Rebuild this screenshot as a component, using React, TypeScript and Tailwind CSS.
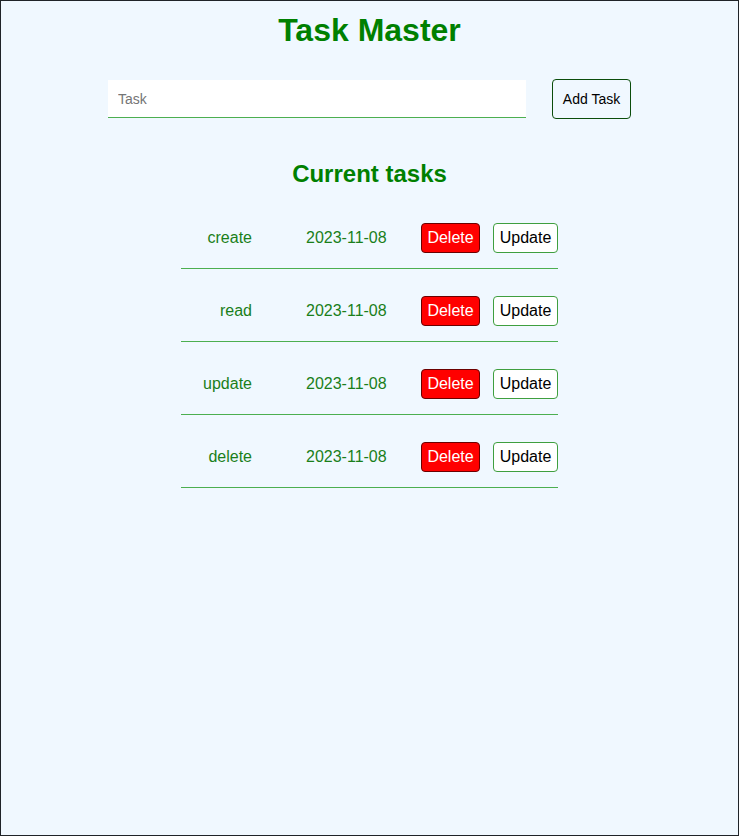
import React, { useState } from 'react';

type Task = {
  id: number;
  name: string;
  date: string;
};

const initialTasks: Task[] = [
  { id: 1, name: 'create', date: '2023-11-08' },
  { id: 2, name: 'read', date: '2023-11-08' },
  { id: 3, name: 'update', date: '2023-11-08' },
  { id: 4, name: 'delete', date: '2023-11-08' },
];

const App: React.FC = () => {
  const [tasks, setTasks] = useState<Task[]>(initialTasks);
  const [newTask, setNewTask] = useState('');

  const handleAdd = (e: React.FormEvent) => {
    e.preventDefault();
    if (!newTask.trim()) return;
    setTasks([...tasks, { id: Date.now(), name: newTask, date: '2023-11-08' }]);
    setNewTask('');
  };

  const handleDelete = (id: number) => {
    setTasks(tasks.filter((t) => t.id !== id));
  };

  return (
    <div className="h-[836px] border border-[#1f2328] bg-[#f0f8ff] font-['Liberation_Sans',Arial,sans-serif] flex flex-col items-center">
      <h1 className="mt-[11px] text-[32px] leading-[37px] font-bold text-[#008000]">Task Master</h1>

      <form onSubmit={handleAdd} className="mt-[30px] flex items-center">
        <input
          type="text"
          placeholder="Task"
          value={newTask}
          onChange={(e) => setNewTask(e.target.value)}
          className="w-[418px] h-[38px] px-[10px] bg-white text-[14px] text-black placeholder:text-[#757575] border-b border-b-[#4caf50] outline-none"
        />
        <button
          type="submit"
          className="ml-[26px] w-[79px] h-[40px] text-[14px] text-black bg-[#f0f8ff] border border-[#0b4d0b] rounded-[4px]"
        >
          Add Task
        </button>
      </form>

      <h2 className="mt-[41px] text-[24px] leading-[28px] font-bold text-[#008000]">Current tasks</h2>

      <ul className="mt-[8px] w-[377px]">
        {tasks.map((task) => (
          <li key={task.id} className="flex items-center pt-[27px] pb-[15px] border-b border-b-[#4caf50]">
            <span className="w-[71px] text-right text-[16px] text-[#1a7f1a]">{task.name}</span>
            <span className="ml-[54px] w-[82px] text-[16px] text-[#1a7f1a]">{task.date}</span>
            <button
              onClick={() => handleDelete(task.id)}
              className="ml-[33px] w-[59px] h-[30px] text-[16px] text-white bg-[#ff0000] border border-[#6b0000] rounded-[4px]"
            >
              Delete
            </button>
            <button className="ml-[13px] w-[65px] h-[30px] text-[16px] text-black bg-white border border-[#3f9f3f] rounded-[4px]">
              Update
            </button>
          </li>
        ))}
      </ul>
    </div>
  );
};

export default App;
